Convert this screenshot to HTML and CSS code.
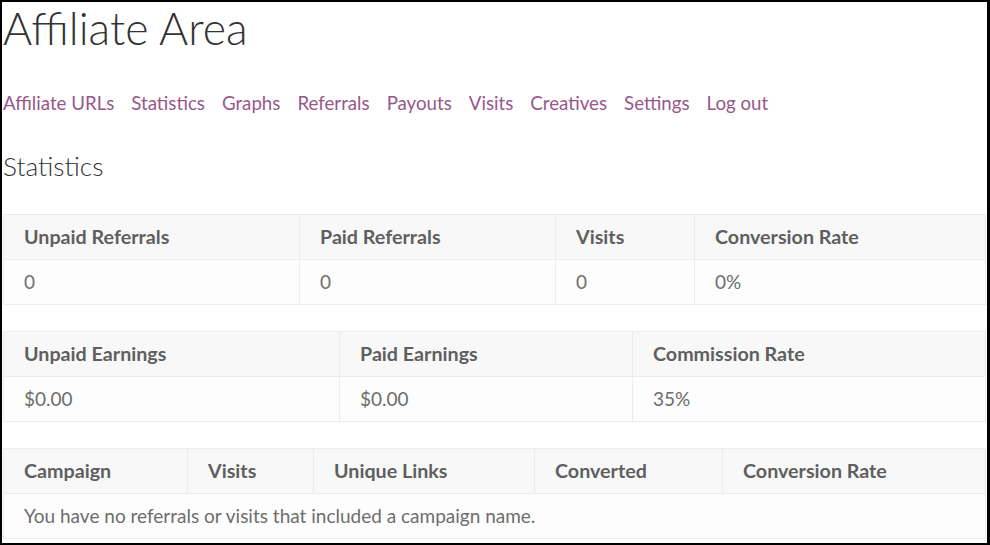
FILE: index.html
```html
<!DOCTYPE html>
<html lang="en">
<head>
<meta charset="utf-8">
<title>Affiliate Area</title>
<link rel="stylesheet" href="styles.css">
</head>
<body>
<div class="frame">
  <div class="page">
    <h1 class="page-title">Affiliate Area</h1>
    <nav class="tabs">
      <a href="#">Affiliate URLs</a>
      <a href="#">Statistics</a>
      <a href="#">Graphs</a>
      <a href="#">Referrals</a>
      <a href="#">Payouts</a>
      <a href="#">Visits</a>
      <a href="#">Creatives</a>
      <a href="#">Settings</a>
      <a href="#">Log out</a>
    </nav>
    <h3 class="section-title">Statistics</h3>

    <table class="stats stats-referrals">
      <colgroup><col class="c1"><col class="c2"><col class="c3"><col class="c4"></colgroup>
      <thead>
        <tr><th>Unpaid Referrals</th><th>Paid Referrals</th><th>Visits</th><th>Conversion Rate</th></tr>
      </thead>
      <tbody>
        <tr><td>0</td><td>0</td><td>0</td><td>0%</td></tr>
      </tbody>
    </table>

    <table class="stats stats-earnings">
      <colgroup><col class="c1"><col class="c2"><col class="c3"></colgroup>
      <thead>
        <tr><th>Unpaid Earnings</th><th>Paid Earnings</th><th>Commission Rate</th></tr>
      </thead>
      <tbody>
        <tr><td>$0.00</td><td>$0.00</td><td>35%</td></tr>
      </tbody>
    </table>

    <table class="stats stats-campaigns">
      <colgroup><col class="c1"><col class="c2"><col class="c3"><col class="c4"><col class="c5"></colgroup>
      <thead>
        <tr><th>Campaign</th><th>Visits</th><th>Unique Links</th><th>Converted</th><th>Conversion Rate</th></tr>
      </thead>
      <tbody>
        <tr><td colspan="5">You have no referrals or visits that included a campaign name.</td></tr>
      </tbody>
    </table>
  </div>
</div>
</body>
</html>
```
FILE: styles.css
```css
html, body {
  margin: 0;
  padding: 0;
  background: #fff;
}

body {
  font-family: Lato, "Open Sans", sans-serif;
  color: #6d6d6d;
}

.frame {
  box-sizing: border-box;
  width: 990px;
  height: 545px;
  border: 2px solid #000;
  border-right-width: 3px;
  overflow: hidden;
}

.page {
  padding: 0 2px 0 1px;
}

.page-title {
  margin: 0;
  font-size: 44.6px;
  font-weight: 300;
  line-height: 52px;
  color: #333;
}

.tabs {
  display: flex;
  gap: 17px;
  margin-top: 37px;
  font-size: 18.7px;
  line-height: 24px;
}

.tabs a {
  color: #96588a;
  text-decoration: none;
}

.section-title {
  margin: 35px 0 32px;
  font-size: 26.3px;
  font-weight: 300;
  line-height: 32px;
  color: #333;
}

.stats {
  width: 982px;
  table-layout: fixed;
  border-collapse: collapse;
  margin-bottom: 26px;
}

.stats th,
.stats td {
  border: 1px solid #ececec;
  padding: 0 0 0 20px;
  height: 44px;
  line-height: 44px;
  text-align: left;
  white-space: nowrap;
  overflow: hidden;
}

.stats th {
  background: #f8f8f8;
  font-size: 19.7px;
  font-weight: 700;
  color: #5f5f5f;
}

.stats td {
  background: #fdfdfd;
  font-size: 19px;
  font-weight: 400;
  color: #6d6d6d;
}

.stats-referrals .c1 { width: 296px; }
.stats-referrals .c2 { width: 256px; }
.stats-referrals .c3 { width: 139px; }
.stats-referrals .c4 { width: 291px; }

.stats-earnings .c1 { width: 336px; }
.stats-earnings .c2 { width: 293px; }
.stats-earnings .c3 { width: 353px; }

.stats-campaigns .c1 { width: 184px; }
.stats-campaigns .c2 { width: 126px; }
.stats-campaigns .c3 { width: 221px; }
.stats-campaigns .c4 { width: 188px; }
.stats-campaigns .c5 { width: 263px; }
```
